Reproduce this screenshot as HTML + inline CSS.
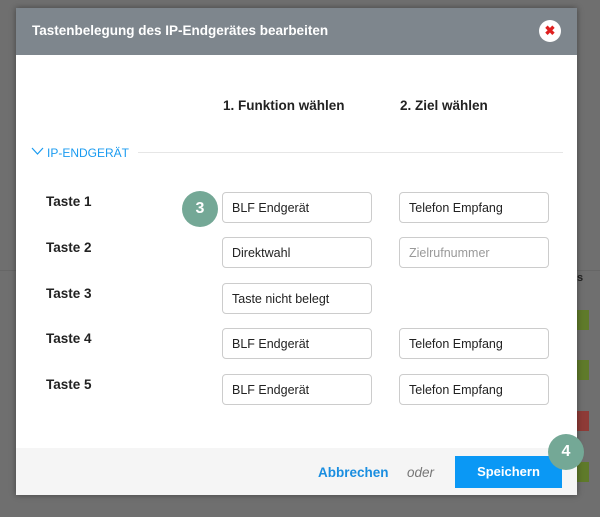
<!DOCTYPE html>
<html><head><style>
*{box-sizing:border-box;margin:0;padding:0}
body{width:600px;height:517px;background:#6f6f6f;font-family:"Liberation Sans",sans-serif;position:relative;overflow:hidden}
.a{position:absolute}
.modal{left:16px;top:8px;width:561px;height:487px;background:#fff;box-shadow:0 0 6px rgba(0,0,0,.4)}
.hdr{left:0;top:0;width:561px;height:47px;background:#7e868d;color:#fff;font-weight:bold;font-size:13.5px;padding:15px 0 0 16px}
.x{left:523px;top:12px;width:22px;height:22px;border-radius:50%;background:#fff;color:#e02020;font-weight:bold;font-size:13px;text-align:center;line-height:22px}
.col{font-weight:bold;font-size:13.5px;color:#222}
.lbl{font-weight:bold;font-size:13.5px;color:#222;left:30px}
.in{width:150px;height:31px;border:1px solid #ccc;border-radius:4px;font-size:12.5px;color:#222;padding:8px 0 0 9px}
.badge{width:36px;height:36px;border-radius:50%;background:#74a896;color:#fff;font-weight:bold;font-size:16px;text-align:center;line-height:36px}
.ftr{left:0;top:440px;width:561px;height:47px;background:#f5f5f5}
</style></head><body>
<div class="a" style="left:0;top:270px;width:600px;height:1px;background:#666"></div>
<div class="a" style="left:577px;top:272px;font-size:11px;font-weight:bold;color:#222">s</div>
<div class="a" style="left:577px;top:310px;width:12px;height:20px;background:#5f7a2a"></div>
<div class="a" style="left:577px;top:360px;width:12px;height:20px;background:#5f7a2a"></div>
<div class="a" style="left:577px;top:411px;width:12px;height:20px;background:#8e3b37"></div>
<div class="a" style="left:577px;top:462px;width:12px;height:20px;background:#5f7a2a"></div>
<div class="a modal">
 <div class="a hdr">Tastenbelegung des IP-Endgerätes bearbeiten</div>
 <div class="a x">✖</div>
 <div class="a col" style="left:207px;top:90px">1. Funktion wählen</div>
 <div class="a col" style="left:384px;top:90px">2. Ziel wählen</div>
 <svg class="a" style="left:15px;top:139px" width="13" height="9" viewBox="0 0 13 9"><path d="M1 1 L6.5 7 L12 1" fill="none" stroke="#1a9bf0" stroke-width="1.2"/></svg>
 <div class="a" style="left:31px;top:138px;font-size:12px;color:#1a9bf0">IP-ENDGERÄT</div>
 <div class="a" style="left:122px;top:144px;width:425px;height:1px;background:#e6e6e6"></div>
 <div class="a lbl" style="top:186px">Taste 1</div>
 <div class="a lbl" style="top:232px">Taste 2</div>
 <div class="a lbl" style="top:278px">Taste 3</div>
 <div class="a lbl" style="top:323px">Taste 4</div>
 <div class="a lbl" style="top:369px">Taste 5</div>
 <div class="a in" style="left:206px;top:184px">BLF Endgerät</div>
 <div class="a in" style="left:206px;top:229px">Direktwahl</div>
 <div class="a in" style="left:206px;top:275px">Taste nicht belegt</div>
 <div class="a in" style="left:206px;top:320px">BLF Endgerät</div>
 <div class="a in" style="left:206px;top:366px">BLF Endgerät</div>
 <div class="a in" style="left:383px;top:184px">Telefon Empfang</div>
 <div class="a in" style="left:383px;top:229px;color:#999">Zielrufnummer</div>
 <div class="a in" style="left:383px;top:320px">Telefon Empfang</div>
 <div class="a in" style="left:383px;top:366px">Telefon Empfang</div>
 <div class="a badge" style="left:166px;top:183px">3</div>
 <div class="a ftr">
  <div class="a" style="left:302px;top:17px;font-weight:bold;font-size:13.5px;color:#1a8ee0">Abbrechen</div>
  <div class="a" style="left:391px;top:17px;font-style:italic;font-size:13.5px;color:#777">oder</div>
  <div class="a" style="left:439px;top:8px;width:107px;height:32px;background:#0a98f5;color:#fff;font-weight:bold;font-size:13px;text-align:center;line-height:32px">Speichern</div>
 </div>
</div>
<div class="a badge" style="left:548px;top:434px">4</div>
</body></html>
